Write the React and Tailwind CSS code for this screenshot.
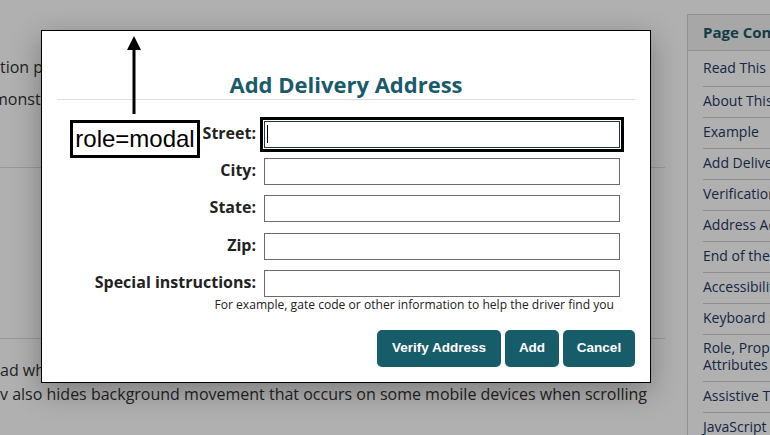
import React from "react";

const links = [
  ["Read This First", "first"],
  ["About This Pattern"],
  ["Example"],
  ["Add Delivery Address"],
  ["Verification Result"],
  ["Address Added"],
  ["End of the Road!"],
  ["Accessibility Features"],
  ["Keyboard Support"],
  ["Role, Properties, States, and", "Attributes"],
  ["Assistive Technology Support"],
  ["JavaScript and CSS Source Code"],
];

function Row({ label, focused, className = "" }) {
  return (
    <div className={"flex items-center h-[27px] " + className}>
      <div className="w-[199px] shrink-0 text-right text-[16px] font-bold text-[#222] leading-[20px] pb-[3px]">
        {label}
      </div>
      <div className="relative ml-[8px]">
        <input
          type="text"
          className={
            "block w-[356px] h-[27px] bg-white px-[3px] text-[14px] " +
            (focused
              ? "border border-[#1c3644] outline-[3px] outline-solid outline-black outline-offset-[1px]"
              : "border border-[#6b6b6b] outline-none")
          }
        />
        {focused && (
          <span className="absolute left-[3px] top-[4px] w-[1px] h-[18px] bg-black" />
        )}
      </div>
    </div>
  );
}

export default function App() {
  return (
    <div className="relative w-[770px] h-[435px] overflow-hidden bg-white font-['Open_Sans',sans-serif]">
      {/* background page */}
      <div className="flex">
        <main className="w-[687px] shrink-0 overflow-hidden text-[16px] text-[#333]">
          <div className="pt-[51px]">
            <div className="leading-[32px] whitespace-nowrap">tion pattern, this implementation prevents</div>
            <div className="leading-[32px] whitespace-nowrap -ml-[7px]">monstrates the modal dialog</div>
          </div>
          <div className="mt-[52px] w-[665px] border-t border-[#dcdcdc]" />
          <div className="mt-[170px] w-[665px] border-t border-[#dcdcdc]" />
          <div className="mt-[19px]">
            <div className="leading-[24px] whitespace-nowrap">ad when the dialog is open</div>
            <div className="leading-[24px] whitespace-nowrap">v also hides background movement that occurs on some mobile devices when scrolling</div>
          </div>
        </main>
        <aside className="mt-[14px] w-[260px] shrink-0 border border-[#d2d2d2] bg-white">
          <div className="h-[36px] bg-[#f2f2f2] border-b border-[#d2d2d2] px-[15px] flex items-center text-[15px] font-bold text-[#1b5866] whitespace-nowrap">
            Page Contents
          </div>
          <ul className="px-[15px]">
            {links.map((l, i) => (
              <li
                key={i}
                className={
                  "border-b border-[#cdcdcd] text-[14px] text-[#22375f] whitespace-nowrap " +
                  (i === 0
                    ? "leading-[16px] pt-[9px] pb-[10px]"
                    : l[1]
                    ? "leading-[17px] pt-[4px] pb-[8px]"
                    : "leading-[16px] pt-[6px] pb-[8px]")
                }
              >
                {l[0]}
                {l[1] && l[1] !== "first" && (
                  <>
                    <br />
                    {l[1]}
                  </>
                )}
              </li>
            ))}
          </ul>
        </aside>
      </div>

      {/* backdrop */}
      <div className="absolute inset-0 bg-[rgba(0,0,0,0.31)]" />

      {/* modal */}
      <div
        role="dialog"
        className="absolute left-[41px] top-[30px] w-[610px] h-[353px] bg-white border border-black shadow-[0_8px_28px_rgba(0,0,0,0.3)] px-[15px]"
      >
        <h2 className="pt-[38px] leading-[30px] h-[69px] border-b border-[#dddddd] text-center text-[22px] font-bold text-[#1a5b6a]">
          Add Delivery Address
        </h2>
        <div className="mt-[21px] flex flex-col">
          <Row label="Street:" focused />
          <Row label="City:" className="mt-[10px]" />
          <Row label="State:" className="mt-[10px]" />
          <Row label="Zip:" className="mt-[11px]" />
          <Row label="Special instructions:" className="mt-[10px]" />
        </div>
        <div className="w-[563px] text-right pr-[6px] text-[12.1px] leading-[16px] text-[#222]">
          For example, gate code or other information to help the driver find you
        </div>
        <div className="mt-[17px] flex justify-end gap-[4px] font-['Liberation_Sans',Arial,sans-serif] text-[13.5px] font-bold text-white">
          <button className="w-[124px] h-[37px] rounded-[5px] bg-[#175c69]">Verify Address</button>
          <button className="w-[54px] h-[37px] rounded-[5px] bg-[#175c69]">Add</button>
          <button className="w-[72px] h-[37px] rounded-[5px] bg-[#175c69]">Cancel</button>
        </div>
      </div>

      {/* annotation */}
      <svg className="absolute left-[124px] top-[34px]" width="20" height="82" viewBox="0 0 20 82">
        <line x1="10" y1="14" x2="10" y2="80" stroke="black" strokeWidth="3" />
        <polygon points="10,2 3,16 17,16" fill="black" />
      </svg>
      <div className="absolute left-[70px] top-[120px] w-[130px] h-[38px] border-[3px] border-black bg-white flex items-center justify-center font-['Liberation_Sans',Arial,sans-serif] text-[24px] text-black leading-none">
        role=modal
      </div>
    </div>
  );
}
